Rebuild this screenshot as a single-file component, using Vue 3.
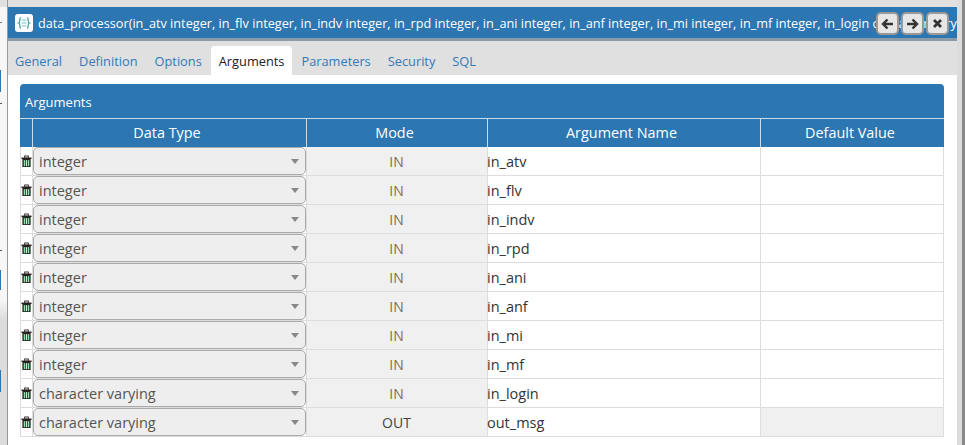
<script setup>
const tabs = ['General', 'Definition', 'Options', 'Arguments', 'Parameters', 'Security', 'SQL']
const rows = [
  ['integer', 'IN', 'in_atv'],
  ['integer', 'IN', 'in_flv'],
  ['integer', 'IN', 'in_indv'],
  ['integer', 'IN', 'in_rpd'],
  ['integer', 'IN', 'in_ani'],
  ['integer', 'IN', 'in_anf'],
  ['integer', 'IN', 'in_mi'],
  ['integer', 'IN', 'in_mf'],
  ['character varying', 'IN', 'in_login'],
  ['character varying', 'OUT', 'out_msg'],
]
const marks = [
  { top: 70, height: 22, color: '#2c76b2', width: 1 },
  { top: 270, height: 20, color: '#2c76b2', width: 1 },
  { top: 370, height: 22, color: '#2c76b2', width: 1 },
  { top: 22, height: 1, color: '#777', width: 2 },
  { top: 103, height: 1, color: '#555', width: 2 },
  { top: 250, height: 1, color: '#555', width: 2 },
]
</script>

<template>
  <div class="page">
    <div class="gutter">
      <i
        v-for="m in marks"
        :key="m.top"
        class="mark"
        :style="{ top: m.top + 'px', height: m.height + 'px', width: m.width + 'px', background: m.color }"
      ></i>
    </div>
    <div class="win">
      <div class="titlebar">
        <span class="logo">
          <svg width="16" height="16" viewBox="0 0 16 16">
            <rect x="5.5" y="4.5" width="5" height="1.2" fill="#8fd0d0" />
            <rect x="5.5" y="7.4" width="5" height="1.2" fill="#8fd0d0" />
            <rect x="5.5" y="10.3" width="5" height="1.2" fill="#8fd0d0" />
            <path d="M5 2.5C3.6 2.8 3.8 4 3.8 5.5S3.8 7.6 2.6 8C3.8 8.4 3.8 9 3.8 10.5S3.6 13.2 5 13.5M11 2.5C12.4 2.8 12.2 4 12.2 5.5S12.2 7.6 13.4 8C12.2 8.4 12.2 9 12.2 10.5S12.4 13.2 11 13.5" fill="none" stroke="#3f9c9c" stroke-width="1.2" />
          </svg>
        </span>
        <span class="title">data_processor(in_atv integer, in_flv integer, in_indv integer, in_rpd integer, in_ani integer, in_anf integer, in_mi integer, in_mf integer, in_login character varying, OUT out_msg text)</span>
        <div class="btns">
          <button class="btn">
            <svg width="13" height="12" viewBox="0 0 13 12"><path d="M6.5 1.5 2 6l4.5 4.5M2.5 6H12" fill="none" stroke="#333" stroke-width="2.4" /></svg>
          </button>
          <button class="btn">
            <svg width="13" height="12" viewBox="0 0 13 12"><path d="M6.5 1.5 11 6l-4.5 4.5M10.5 6H1" fill="none" stroke="#333" stroke-width="2.4" /></svg>
          </button>
          <button class="btn">
            <svg width="11" height="11" viewBox="0 0 11 11"><path d="M2 2l7 7M9 2l-7 7" fill="none" stroke="#333" stroke-width="2.8" /></svg>
          </button>
        </div>
      </div>
      <div class="tabs">
        <span v-for="t in tabs" :key="t" class="tab" :class="{ active: t === 'Arguments' }">{{ t }}</span>
      </div>
      <div class="content">
        <div class="panel">
          <div class="panel-head">Arguments</div>
          <div class="grid head">
            <div class="hc"></div>
            <div class="hc">Data Type</div>
            <div class="hc">Mode</div>
            <div class="hc">Argument Name</div>
            <div class="hc last">Default Value</div>
          </div>
          <div v-for="r in rows" :key="r[2]" class="grid row">
            <div class="cell trash">
              <svg width="12" height="13" viewBox="0 0 12 13">
                <rect x="0.5" y="2.2" width="11" height="1.6" fill="#2a2020" />
                <rect x="4" y="0.5" width="4" height="2.4" fill="none" stroke="#2a2020" stroke-width="1" />
                <path d="M1.5 3.5h9v9h-9z" fill="#2a2020" />
                <rect x="3" y="5" width="1.5" height="6.6" fill="#8fe0a8" />
                <rect x="5.3" y="5" width="1.4" height="6.6" fill="#c8f0d0" />
                <rect x="7.5" y="5" width="1.5" height="6.6" fill="#8fe0a8" />
              </svg>
            </div>
            <div class="cell sel">
              <div class="select">
                <span>{{ r[0] }}</span>
                <i class="caret"></i>
              </div>
            </div>
            <div class="cell mode" :class="{ out: r[1] === 'OUT' }">{{ r[1] }}</div>
            <div class="cell name">{{ r[2] }}</div>
            <div class="cell def" :class="{ off: r[1] === 'OUT' }"></div>
          </div>
        </div>
      </div>
    </div>
    <div class="scroll"></div>
  </div>
</template>

<style scoped>
.page {
  display: flex;
  width: 965px;
  height: 445px;
  overflow: hidden;
  background: #fff;
  font-family: "Open Sans", sans-serif;
  color: #333;
}
.gutter {
  position: relative;
  width: 8px;
  flex: none;
  background: linear-gradient(to bottom, #e0e0e0 7px, #f6f6f6 7px, #f6f6f6 300px, #dcdcdc 320px);
  border-right: 1px solid #999;
  box-sizing: border-box;
}
.mark {
  position: absolute;
  left: 0;
}
.win {
  width: 949px;
  flex: none;
  padding-top: 7px;
  background: #e0e0e0;
  display: flex;
  flex-direction: column;
  min-width: 0;
}
.titlebar {
  position: relative;
  height: 34px;
  flex: none;
  box-sizing: border-box;
  background: #2c76b2;
  border-bottom: 3px solid #8a9aa6;
  display: flex;
  align-items: center;
  padding-left: 7px;
  overflow: hidden;
  color: #fff;
  font-size: 12.7px;
}
.logo {
  flex: none;
  width: 18px;
  height: 18px;
  background: #fff;
  border-radius: 3px;
  display: flex;
  align-items: center;
  justify-content: center;
  margin-right: 5px;
}
.title {
  white-space: nowrap;
}
.btns {
  position: absolute;
  right: 8px;
  top: 5px;
  display: flex;
  gap: 2px;
}
.btn {
  width: 23px;
  height: 23px;
  padding: 0;
  box-sizing: border-box;
  border: 2px solid #999;
  border-radius: 5px;
  background: #e6e6e6;
  display: flex;
  align-items: center;
  justify-content: center;
}
.tabs {
  height: 34px;
  flex: none;
  display: flex;
  align-items: flex-end;
  margin-left: -1px;
  font-size: 12.8px;
}
.tab {
  height: 29px;
  line-height: 30px;
  padding: 0 8px;
  margin-right: 1px;
  color: #337ab7;
  border-radius: 4px 4px 0 0;
}
.tab.active {
  background: #fff;
  color: #222;
}
.content {
  flex: 1;
  background: #fff;
  padding: 9px 13px 0 12px;
}
.panel-head {
  height: 35px;
  box-sizing: border-box;
  background: #2c76b2;
  color: #fff;
  border-radius: 4px 4px 0 0;
  font-size: 13px;
  line-height: 36px;
  padding-left: 5px;
  border-bottom: 1px solid #c8dced;
}
.grid {
  display: grid;
  grid-template-columns: 13px 274px 181px 273px 183px;
}
.head {
  height: 28px;
  background: #2c76b2;
  color: #fff;
  font-size: 14.4px;
}
.hc {
  text-align: center;
  line-height: 27px;
  border-right: 1px solid #c8dced;
  box-sizing: border-box;
  padding-right: 5px;
}
.hc.last {
  border-right: 0;
}
.row {
  height: 29px;
}
.cell {
  box-sizing: border-box;
  border-bottom: 1px solid #ddd;
  border-right: 1px solid #ddd;
  font-size: 14.5px;
  display: flex;
  align-items: center;
}
.trash {
  border-left: 1px solid #ddd;
  justify-content: center;
}
.select {
  width: 273px;
  height: 28px;
  flex: none;
  box-sizing: border-box;
  border: 1px solid #aaa;
  border-radius: 5px;
  background: #eee;
  display: flex;
  align-items: center;
  justify-content: space-between;
  padding: 0 6px 0 5px;
  color: #555;
}
.caret {
  width: 0;
  height: 0;
  border-left: 4.5px solid transparent;
  border-right: 4.5px solid transparent;
  border-top: 5px solid #888;
}
.mode {
  justify-content: center;
  background: #f0f0f0;
  color: #8a6a4a;
  font-size: 14px;
  padding-right: 1px;
}
.mode.out {
  color: #444;
}
.name {
  color: #333;
  text-indent: -1px;
}
.def.off {
  background: #f0f0f0;
}
.scroll {
  width: 8px;
  flex: none;
  background: linear-gradient(to right, #dcdcdc 5px, #888 5px);
}
</style>
